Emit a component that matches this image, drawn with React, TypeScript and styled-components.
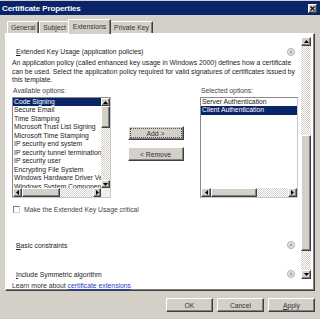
import React from 'react';
import styled, { createGlobalStyle, css } from 'styled-components';

const GlobalStyle = createGlobalStyle`
  html, body {
    margin: 0;
    padding: 0;
    background: #d4d0c8;
  }
  body {
    font-family: "Liberation Sans", Arial, sans-serif;
    font-size: 6.8px;
    color: #222;
  }
  * {
    box-sizing: border-box;
  }
`;

const raised = css`
  background: #d4d0c8;
  border: 1px solid;
  border-color: #fff #404040 #404040 #fff;
  box-shadow: inset -1px -1px #808080;
`;

const hatched = css`
  background-color: #fff;
  background-image: repeating-conic-gradient(#d4d0c8 0 25%, #fff 0 50%);
  background-size: 2px 2px;
`;

const Window = styled.div`
  width: 320px;
  height: 319px;
  background: #d4d0c8;
  display: flex;
  flex-direction: column;
  overflow: hidden;
`;

const TitleBar = styled.div`
  height: 14px;
  margin-top: 1px;
  background: #0a246a;
  display: flex;
  align-items: center;
  justify-content: space-between;
  padding: 0 3px 0 2px;
`;

const Title = styled.span`
  color: #fff;
  font-weight: bold;
  font-size: 8px;
  letter-spacing: -0.1px;
`;

const CloseButton = styled.div`
  ${raised};
  width: 9px;
  height: 9px;
  display: flex;
  align-items: center;
  justify-content: center;
`;

const TabStrip = styled.div`
  display: flex;
  align-items: flex-end;
  height: 14px;
  margin: 4px 0 0 5px;
  padding-left: 2px;
`;

const Tab = styled.div<{ $active?: boolean }>`
  background: #d4d0c8;
  border: 1px solid;
  border-color: #fff #404040 transparent #fff;
  border-bottom: none;
  border-radius: 1px 1px 0 0;
  box-shadow: inset -1px 0 #808080;
  height: 12px;
  padding: 0 3px;
  line-height: 11px;
  white-space: nowrap;
  color: #333;

  ${p => p.$active && css`
    height: 15px;
    line-height: 13px;
    margin: 0 -1px -1px -2px;
    padding: 0 4px;
    position: relative;
    z-index: 1;
    background: #d4d0c8;
  `}
`;

const TabPanel = styled.div`
  width: 310px;
  height: 258px;
  margin-left: 5px;
  background: #fff;
  border: 1px solid;
  border-color: #fff #404040 #404040 #fff;
  box-shadow: inset -1px -1px #808080;
  padding: 3px 3px 0 0;
  display: flex;
  flex-direction: column;
`;

const ScrollArea = styled.div`
  display: flex;
  height: 242px;
  flex: none;
`;

const Content = styled.div`
  flex: 1;
  overflow: hidden;
  padding-left: 6px;
  display: flex;
  flex-direction: column;
`;

const SectionHeader = styled.div<{ $gap: number }>`
  flex: none;
  height: 9px;
  margin-top: ${p => p.$gap}px;
  padding: 0 6px 0 4px;
  display: flex;
  align-items: center;
  justify-content: space-between;
  white-space: nowrap;
`;

const Description = styled.p`
  margin: 3.1px 0 0;
  line-height: 8.4px;
  padding-right: 4px;
`;

const OptionsRow = styled.div`
  margin-top: 2.5px;
  display: grid;
  grid-template-columns: 99px 89px 98px;
  flex: none;
`;

const OptionsColumn = styled.div`
  display: flex;
  flex-direction: column;
`;

const ListLabel = styled.div`
  line-height: 8.4px;
  padding-left: 1px;
  color: #444;
  margin-bottom: 1.8px;
  white-space: nowrap;
`;

const ListBox = styled.div<{ $vscroll?: boolean }>`
  height: 101px;
  border: 1px solid;
  border-color: #8a8a8a #c8c8c8 #c8c8c8 #8a8a8a;
  background: #fff;
  display: grid;
  grid-template-columns: ${p => (p.$vscroll ? '1fr 9px' : '1fr')};
  grid-template-rows: 90px 9px;
  overflow: hidden;
`;

const Items = styled.div`
  overflow: hidden;
`;

const Item = styled.div<{ $selected?: boolean }>`
  height: 8.47px;
  line-height: 8.47px;
  padding-left: 1px;
  white-space: nowrap;
  overflow: hidden;
  background: ${p => (p.$selected ? '#0a246a' : 'transparent')};
  color: ${p => (p.$selected ? '#fff' : '#222')};
`;

const Corner = styled.div`
  background: #f0efeb;
`;

const ScrollV = styled.div<{ $width: number }>`
  display: flex;
  flex-direction: column;
  width: ${p => p.$width}px;
  flex: none;
`;

const ScrollH = styled.div`
  display: flex;
  height: 9px;
`;

const ArrowBtn = styled.div<{ $len: number }>`
  ${raised};
  flex: 0 0 ${p => p.$len}px;
  display: flex;
  align-items: center;
  justify-content: center;
`;

const Thumb = styled.div<{ $len: number }>`
  ${raised};
  flex: 0 0 ${p => p.$len}px;
`;

const Track = styled.div<{ $len?: number }>`
  ${hatched};
  flex: ${p => (p.$len ? `0 0 ${p.$len}px` : '1 1 auto')};
`;

const MiddleColumn = styled.div`
  display: flex;
  flex-direction: column;
  align-items: center;
  gap: 7px;
  padding-top: 39.2px;
`;

const Button = styled.div<{ $width: number; $focused?: boolean }>`
  ${raised};
  width: ${p => p.$width}px;
  height: 14px;
  display: flex;
  align-items: center;
  justify-content: center;
  color: #333;
  white-space: nowrap;

  ${p => p.$focused && css`
    outline: 1px dotted #555;
    outline-offset: -3px;
  `}
`;

const CheckRow = styled.div`
  margin-top: 7px;
  height: 8px;
  display: flex;
  align-items: center;
  gap: 4px;
  padding-left: 1px;
  flex: none;
  color: #444;
`;

const CheckBox = styled.div`
  width: 7px;
  height: 7px;
  border: 1px solid;
  border-color: #7a7a7a #d0d0d0 #d0d0d0 #7a7a7a;
  background: #fff;
`;

const Footer = styled.div`
  margin-top: 2.8px;
  padding-left: 6px;
  line-height: 8.4px;
  color: #333;
`;

const LinkText = styled.span`
  color: #1f3fbf;
  text-decoration: underline;
`;

const ButtonRow = styled.div`
  display: flex;
  justify-content: flex-end;
  gap: 4px;
  margin-top: 7px;
  padding-right: 5px;
`;

type Dir = 'up' | 'down' | 'left' | 'right';

const Arrow = ({ dir }: { dir: Dir }) => {
  const vertical = dir === 'up' || dir === 'down';
  const pts: Record<Dir, string> = {
    up: '0,3 2.5,0 5,3',
    down: '0,0 5,0 2.5,3',
    left: '3,0 3,5 0,2.5',
    right: '0,0 3,2.5 0,5',
  };
  return (
    <svg width={vertical ? 5 : 3} height={vertical ? 3 : 5} viewBox={vertical ? '0 0 5 3' : '0 0 3 5'}>
      <polygon points={pts[dir]} fill="#000" />
    </svg>
  );
};

const CollapseIcon = () => (
  <svg width="8" height="8" viewBox="0 0 16 16">
    <circle cx="8" cy="8" r="7.2" fill="#e6e6e6" stroke="#9c9c9c" strokeWidth="1.4" />
    <path d="M5 8.2 L8 5.2 L11 8.2 M5 11.4 L8 8.4 L11 11.4" stroke="#7a7a7a" strokeWidth="1.6" fill="none" />
  </svg>
);

const available = [
  'Code Signing',
  'Secure Email',
  'Time Stamping',
  'Microsoft Trust List Signing',
  'Microsoft Time Stamping',
  'IP security end system',
  'IP security tunnel termination',
  'IP security user',
  'Encrypting File System',
  'Windows Hardware Driver Verification',
  'Windows System Component Verification',
];

const selected = ['Server Authentication', 'Client Authentication'];

const tabs = ['General', 'Subject', 'Extensions', 'Private Key'];

export default function App() {
  return (
    <>
      <GlobalStyle />
      <Window>
        <TitleBar>
          <Title>Certificate Properties</Title>
          <CloseButton>
            <svg width="5" height="5" viewBox="0 0 5 5">
              <path d="M0.5 0.5 L4.5 4.5 M4.5 0.5 L0.5 4.5" stroke="#000" strokeWidth="1.1" />
            </svg>
          </CloseButton>
        </TitleBar>

        <TabStrip>
          {tabs.map(t => (
            <Tab key={t} $active={t === 'Extensions'}>
              {t}
            </Tab>
          ))}
        </TabStrip>

        <TabPanel>
          <ScrollArea>
            <Content>
              <SectionHeader $gap={10}>
                <span>
                  <u>E</u>xtended Key Usage (application policies)
                </span>
                <CollapseIcon />
              </SectionHeader>
              <Description>
                An application policy (called enhanced key usage in Windows 2000) defines how a certificate
                can be used. Select the application policy required for valid signatures of certificates issued
                by this template.
              </Description>

              <OptionsRow>
                <OptionsColumn>
                  <ListLabel>Available options:</ListLabel>
                  <ListBox $vscroll>
                    <Items>
                      {available.map((a, i) => (
                        <Item key={a} $selected={i === 0}>
                          {a}
                        </Item>
                      ))}
                    </Items>
                    <ScrollV $width={9}>
                      <ArrowBtn $len={8}>
                        <Arrow dir="up" />
                      </ArrowBtn>
                      <Thumb $len={22} />
                      <Track />
                      <ArrowBtn $len={8}>
                        <Arrow dir="down" />
                      </ArrowBtn>
                    </ScrollV>
                    <ScrollH>
                      <ArrowBtn $len={9}>
                        <Arrow dir="left" />
                      </ArrowBtn>
                      <Thumb $len={38} />
                      <Track />
                      <ArrowBtn $len={8}>
                        <Arrow dir="right" />
                      </ArrowBtn>
                    </ScrollH>
                    <Corner />
                  </ListBox>
                </OptionsColumn>

                <MiddleColumn>
                  <Button $width={56} $focused>
                    Add &gt;
                  </Button>
                  <Button $width={56}>&lt; Remove</Button>
                </MiddleColumn>

                <OptionsColumn>
                  <ListLabel>Selected options:</ListLabel>
                  <ListBox>
                    <Items>
                      {selected.map((s, i) => (
                        <Item key={s} $selected={i === 1}>
                          {s}
                        </Item>
                      ))}
                    </Items>
                    <ScrollH>
                      <ArrowBtn $len={10}>
                        <Arrow dir="left" />
                      </ArrowBtn>
                      <Thumb $len={46} />
                      <Track />
                      <ArrowBtn $len={9}>
                        <Arrow dir="right" />
                      </ArrowBtn>
                    </ScrollH>
                  </ListBox>
                </OptionsColumn>
              </OptionsRow>

              <CheckRow>
                <CheckBox />
                <span>Make the Extended Key Usage critical</span>
              </CheckRow>

              <SectionHeader $gap={27.5}>
                <span>
                  <u>B</u>asic constraints
                </span>
                <CollapseIcon />
              </SectionHeader>

              <SectionHeader $gap={20}>
                <span>
                  <u>I</u>nclude Symmetric algorithm
                </span>
                <CollapseIcon />
              </SectionHeader>
            </Content>

            <ScrollV $width={10}>
              <ArrowBtn $len={9}>
                <Arrow dir="up" />
              </ArrowBtn>
              <Track $len={89} />
              <Thumb $len={116} />
              <Track />
              <ArrowBtn $len={9}>
                <Arrow dir="down" />
              </ArrowBtn>
            </ScrollV>
          </ScrollArea>

          <Footer>
            Learn more about <LinkText>certificate extensions</LinkText>
          </Footer>
        </TabPanel>

        <ButtonRow>
          <Button $width={47}>OK</Button>
          <Button $width={47}>Cancel</Button>
          <Button $width={47}>
            <u>A</u>pply
          </Button>
        </ButtonRow>
      </Window>
    </>
  );
}
